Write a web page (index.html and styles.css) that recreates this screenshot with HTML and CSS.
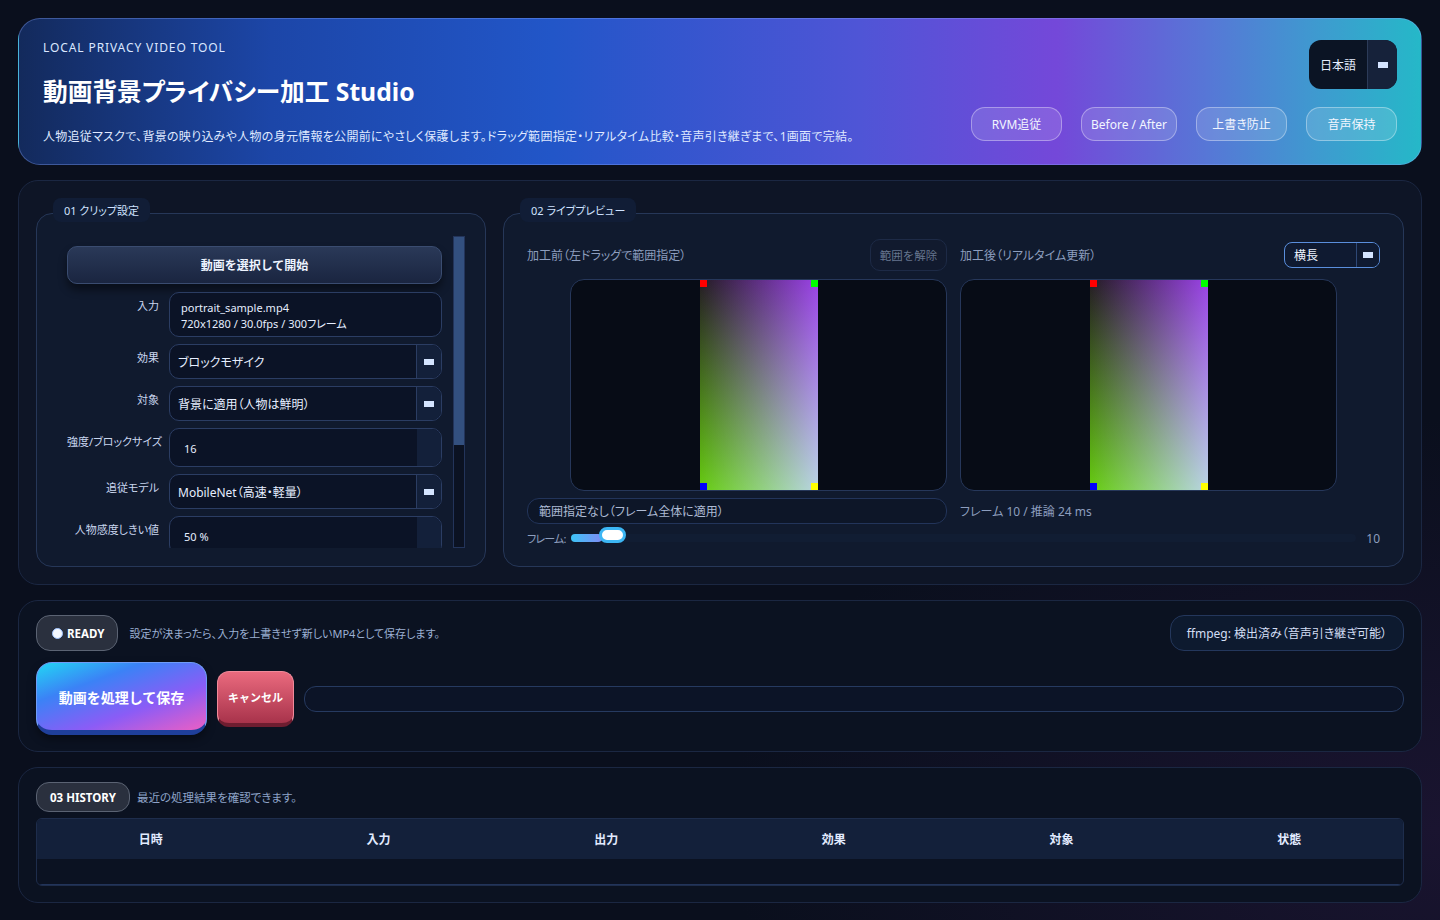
FILE: index.html
```html
<!DOCTYPE html>
<html lang="ja">
<head>
    <meta charset="UTF-8">
    <title>動画背景プライバシー加工 Studio</title>
    <link rel="stylesheet" href="styles.css">
</head>
<body>
    <div class="app">
        <header class="hero">
            <div class="hero-text">
                <div class="eyebrow">LOCAL PRIVACY VIDEO TOOL</div>
                <h1>動画背景プライバシー加工 Studio</h1>
                <p>人物追従マスクで、背景の映り込みや人物の身元情報を公開前にやさしく保護します。ドラッグ範囲指定・リアルタイム比較・音声引き継ぎまで、1画面で完結。</p>
            </div>
            <div class="hero-side">
                <div class="lang-combo">
                    <span class="lang-value">日本語</span>
                    <span class="lang-arrow"><i class="arrow"></i></span>
                </div>
                <div class="chips">
                    <span class="chip">RVM追従</span>
                    <span class="chip">Before / After</span>
                    <span class="chip">上書き防止</span>
                    <span class="chip">音声保持</span>
                </div>
            </div>
        </header>

        <section class="panel main-panel">
            <div class="group clip-group">
                <div class="group-title">01 クリップ設定</div>
                <div class="scroll-area">
                    <div class="scroll-content">
                        <button class="open-btn">動画を選択して開始</button>
                        <div class="form-row">
                            <label>入力</label>
                            <div class="info-box">
                                portrait_sample.mp4<br>
                                720x1280 / 30.0fps / 300フレーム
                            </div>
                        </div>
                        <div class="form-row">
                            <label>効果</label>
                            <div class="combo"><span>ブロックモザイク</span><span class="combo-btn"><i class="arrow"></i></span></div>
                        </div>
                        <div class="form-row">
                            <label>対象</label>
                            <div class="combo"><span>背景に適用（人物は鮮明）</span><span class="combo-btn"><i class="arrow"></i></span></div>
                        </div>
                        <div class="form-row">
                            <label>強度/ブロックサイズ</label>
                            <div class="spin"><span>16</span><span class="spin-btn"></span></div>
                        </div>
                        <div class="form-row">
                            <label>追従モデル</label>
                            <div class="combo"><span>MobileNet（高速・軽量）</span><span class="combo-btn"><i class="arrow"></i></span></div>
                        </div>
                        <div class="form-row">
                            <label>人物感度しきい値</label>
                            <div class="spin"><span>50 %</span><span class="spin-btn"></span></div>
                        </div>
                    </div>
                    <div class="scrollbar"><div class="scroll-handle"></div></div>
                </div>
            </div>

            <div class="group preview-group">
                <div class="group-title">02 ライブプレビュー</div>
                <div class="preview-cols">
                    <div class="preview-col before">
                        <div class="preview-head">
                            <span class="muted">加工前（左ドラッグで範囲指定）</span>
                            <button class="ghost-btn">範囲を解除</button>
                        </div>
                        <div class="preview-box">
                            <div class="frame">
                                <i class="mark tl"></i><i class="mark tr"></i><i class="mark bl"></i><i class="mark br"></i>
                            </div>
                        </div>
                        <div class="range-box">範囲指定なし（フレーム全体に適用）</div>
                    </div>
                    <div class="preview-col after">
                        <div class="preview-head">
                            <span class="muted">加工後（リアルタイム更新）</span>
                            <div class="small-combo"><span>横長</span><span class="combo-btn"><i class="arrow"></i></span></div>
                        </div>
                        <div class="preview-box">
                            <div class="frame">
                                <i class="mark tl"></i><i class="mark tr"></i><i class="mark bl"></i><i class="mark br"></i>
                            </div>
                        </div>
                        <div class="stats">フレーム 10 / 推論 24 ms</div>
                    </div>
                </div>
                <div class="slider-row">
                    <span class="muted slider-label">フレーム:</span>
                    <div class="slider">
                        <div class="slider-fill" style="width: 31px"></div>
                        <div class="slider-knob" style="left: 28px"></div>
                    </div>
                    <span class="muted">10</span>
                </div>
            </div>
        </section>

        <section class="panel status-panel">
            <div class="status-row">
                <span class="pill ready"><i class="dot"></i>READY</span>
                <span class="note">設定が決まったら、入力を上書きせず新しいMP4として保存します。</span>
                <span class="ffmpeg">ffmpeg: 検出済み（音声引き継ぎ可能）</span>
            </div>
            <div class="action-row">
                <button class="process-btn">動画を処理して保存</button>
                <button class="cancel-btn">キャンセル</button>
                <div class="progress"></div>
            </div>
        </section>

        <section class="panel history-panel">
            <div class="history-head">
                <span class="pill">03 HISTORY</span>
                <span class="note">最近の処理結果を確認できます。</span>
            </div>
            <div class="table-wrap">
                <table>
                    <thead>
                        <tr>
                            <th>日時</th>
                            <th>入力</th>
                            <th>出力</th>
                            <th>効果</th>
                            <th>対象</th>
                            <th>状態</th>
                        </tr>
                    </thead>
                    <tbody>
                        <tr><td colspan="6"></td></tr>
                    </tbody>
                </table>
            </div>
        </section>
    </div>
</body>
</html>
```

FILE: styles.css
```css
* {
    box-sizing: border-box;
}

body {
    margin: 0;
    background: radial-gradient(ellipse at 100% 90%, #1a1430 0%, #0a0f1d 35%) #0a0f1d;
    font-family: "Noto Sans", "Noto Sans CJK JP", sans-serif;
    font-size: 12px;
    color: #dbe6fb;
    font-feature-settings: "palt";
}

.app {
    padding: 18px;
    display: flex;
    flex-direction: column;
    gap: 15px;
}

/* header */
.hero {
    height: 147px;
    border-radius: 22px;
    border: 1px solid rgba(140, 170, 255, 0.35);
    background: linear-gradient(90deg, #132a5c 0%, #1c46a8 18%, #2256c8 38%, #4f55d6 60%, #7448d9 74%, #5678d6 85%, #3d9ccf 93%, #25b8c8 100%);
    padding: 22px 24px 23px 24px;
    display: flex;
    justify-content: space-between;
}

.eyebrow {
    font-size: 12px;
    letter-spacing: 0.9px;
    color: #dbe7ff;
    margin-top: -2px;
}

.hero h1 {
    margin: 18px 0 0 0;
    font-size: 24.7px;
    font-weight: 700;
    color: #ffffff;
    line-height: 36px;
}

.hero p {
    margin: 17px 0 0 0;
    font-size: 12px;
    letter-spacing: 0.28px;
    color: #dfe8ff;
}

.hero-side {
    display: flex;
    flex-direction: column;
    align-items: flex-end;
    justify-content: space-between;
}

.lang-combo {
    width: 88px;
    height: 49px;
    margin-top: -1px;
    border-radius: 12px;
    background: #0b1424;
    display: flex;
    overflow: hidden;
}

.lang-value {
    flex: 1;
    display: flex;
    align-items: center;
    justify-content: center;
    color: #e6eeff;
    border-right: 1px solid #2c3b58;
}

.lang-arrow {
    width: 29px;
    background: #16223a;
    display: flex;
    align-items: center;
    justify-content: center;
}

.arrow {
    display: block;
    width: 10px;
    height: 6px;
    background: #d4e4ff;
}

.chips {
    display: flex;
    gap: 19px;
}

.chip {
    height: 34px;
    min-width: 91px;
    padding: 0 9px;
    border-radius: 14px;
    border: 1px solid rgba(255, 255, 255, 0.35);
    background: rgba(255, 255, 255, 0.13);
    color: #f2f6ff;
    display: flex;
    align-items: center;
    justify-content: center;
    font-size: 12px;
}

/* panels */
.panel {
    border-radius: 20px;
    border: 1px solid #1b2742;
    padding: 17px;
}

.main-panel {
    background: #0e1526;
    display: flex;
    gap: 17px;
    height: 405px;
}

.group {
    position: relative;
    margin-top: 15px;
    border: 1px solid #263758;
    border-radius: 16px;
    background: #101a2e;
}

.group-title {
    position: absolute;
    top: -16px;
    left: 16px;
    height: 24px;
    padding: 0 11px;
    border-radius: 8px;
    background: #111d36;
    color: #cfe2ff;
    font-size: 11px;
    display: flex;
    align-items: center;
}

.clip-group {
    width: 450px;
    padding: 22px 20px 19px 19px;
}

.scroll-area {
    display: flex;
    height: 312px;
}

.scroll-content {
    flex: 1;
    overflow: hidden;
    padding: 10px 11px 0 11px;
}

.scrollbar {
    width: 12px;
    border: 1px solid #23345a;
    background: #0b1222;
}

.scroll-handle {
    height: 208px;
    background: #33507f;
}

.open-btn {
    width: 100%;
    height: 38px;
    border-radius: 10px;
    border: 1px solid #3a4c70;
    background: linear-gradient(180deg, #2a3958 0%, #1a2540 100%);
    color: #eef4ff;
    font-family: inherit;
    font-size: 12px;
    font-weight: 700;
    box-shadow: 0 6px 8px rgba(0, 0, 0, 0.45);
    margin-bottom: 8px;
}

.form-row {
    display: flex;
    gap: 10px;
    margin-bottom: 7px;
}

.form-row label {
    width: 92px;
    text-align: right;
    color: #c9d6ee;
    font-size: 11px;
    padding-top: 5px;
    white-space: nowrap;
}

.info-box {
    flex: 1;
    height: 45px;
    border: 1px solid #2b3d63;
    border-radius: 10px;
    background: #0b1326;
    padding: 7px 11px;
    line-height: 16px;
    font-size: 11px;
    color: #e6eeff;
}

.combo, .spin {
    flex: 1;
    height: 35px;
    border: 1px solid #2b3d63;
    border-radius: 10px;
    background: #0b1326;
    display: flex;
    overflow: hidden;
    color: #e6eeff;
}

.spin {
    height: 39px;
    font-size: 11px;
}

.combo span:first-child, .spin span:first-child {
    flex: 1;
    display: flex;
    align-items: center;
    padding-left: 8px;
}

.spin span:first-child {
    padding-left: 14px;
    padding-top: 2px;
}

.combo-btn {
    width: 25px;
    border-left: 1px solid #2b3d63;
    background: #13203a;
    display: flex;
    align-items: center;
    justify-content: center;
}

.spin-btn {
    width: 24px;
    background: #13203a;
}

/* preview */
.preview-group {
    flex: 1;
    padding: 25px 23px 20px 23px;
}

.preview-cols {
    display: flex;
    gap: 13px;
}

.preview-col {
    flex: 1;
    display: flex;
    flex-direction: column;
}

.preview-head {
    height: 32px;
    display: flex;
    align-items: center;
    justify-content: space-between;
}

.muted {
    color: #8d9ebf;
}

.ghost-btn {
    width: 77px;
    height: 32px;
    padding: 0;
    border-radius: 10px;
    border: 1px solid #1d2a46;
    background: #111a2e;
    color: #66768f;
    font-family: inherit;
    font-size: 11.5px;
}

.small-combo {
    width: 96px;
    height: 26px;
    border: 1.5px solid #5a8edc;
    border-radius: 8px;
    background: #0f1a31;
    display: flex;
    overflow: hidden;
    color: #eef4ff;
}

.small-combo span:first-child {
    flex: 1;
    display: flex;
    align-items: center;
    padding-left: 9px;
}

.small-combo .combo-btn {
    width: 23px;
    border-left-color: #2e4876;
    background: #0f1a31;
}

.preview-box {
    width: 377px;
    height: 212px;
    margin-top: 8px;
    border: 1px solid #26375a;
    border-radius: 14px;
    background: #070c16;
    overflow: hidden;
    display: flex;
    justify-content: center;
}

.before .preview-box {
    align-self: flex-end;
}

.frame {
    position: relative;
    width: 118px;
    height: 100%;
    background: linear-gradient(90deg, rgba(138, 43, 226, 0) 0%, #8a2be2 100%), linear-gradient(180deg, #241c24 0%, #66cc10 100%);
    background-blend-mode: screen;
}

.mark {
    position: absolute;
    width: 7px;
    height: 7px;
}

.mark.tl { top: 0; left: 0; background: #ff0000; }
.mark.tr { top: 0; right: 0; background: #00ff00; }
.mark.bl { bottom: 0; left: 0; background: #0000ff; }
.mark.br { bottom: 0; right: 0; background: #ffff00; }

.range-box {
    margin-top: 7px;
    height: 26px;
    border: 1px solid #22345a;
    border-radius: 12px;
    background: #0d1628;
    padding-left: 11px;
    display: flex;
    align-items: center;
    color: #aebbd4;
}

.stats {
    margin-top: 7px;
    height: 26px;
    display: flex;
    align-items: center;
    color: #8d9ebf;
}

.slider-row {
    margin-top: 4px;
    display: flex;
    align-items: center;
    gap: 5px;
    height: 20px;
}

.slider-label {
    font-size: 11px;
    letter-spacing: -0.8px;
}

.slider {
    position: relative;
    flex: 1;
    height: 8px;
    border-radius: 4px;
    background: #111d33;
    margin-right: 5px;
}

.slider-fill {
    height: 100%;
    border-radius: 4px;
    background: linear-gradient(90deg, #3cc4f6, #7f8cf5);
}

.slider-knob {
    position: absolute;
    top: -7px;
    width: 27px;
    height: 16px;
    border-radius: 8px;
    background: #ffffff;
    border: 3px solid #3cb6f4;
}

/* status */
.status-panel {
    background: #0b1221;
    padding: 14px 17px 16px 17px;
}

.status-row {
    display: flex;
    align-items: center;
    gap: 11px;
}

.pill {
    height: 36px;
    padding: 0 13px;
    border-radius: 14px;
    border: 1px solid #5b6373;
    background: #2a303e;
    color: #ffffff;
    font-weight: 700;
    font-size: 11.5px;
    display: flex;
    align-items: center;
}

.ready {
    padding: 0 13px 0 15px;
}

.dot {
    width: 11px;
    height: 11px;
    border-radius: 50%;
    background: #f4f8ff;
    border: 1px solid #9fc3ff;
    margin-right: 4px;
}

.note {
    color: #9bb0d3;
    font-size: 11px;
}

.ffmpeg {
    margin-left: auto;
    height: 36px;
    padding: 0 16px;
    border-radius: 14px;
    border: 1px solid #24375c;
    background: #0d1a2f;
    color: #d3def4;
    display: flex;
    align-items: center;
}

.action-row {
    margin-top: 11px;
    display: flex;
    align-items: center;
    gap: 10px;
}

.process-btn {
    width: 171px;
    height: 73px;
    border-radius: 16px;
    border: 1px solid #6f9cf7;
    border-bottom: 5px solid #1f3f9a;
    background: linear-gradient(160deg, #22d6f4 0%, #3b82f6 30%, #8b5cf6 65%, #ec5fc4 100%);
    color: #ffffff;
    font-family: inherit;
    font-size: 14px;
    font-weight: 700;
    box-shadow: 0 4px 8px rgba(0, 0, 0, 0.4);
}

.cancel-btn {
    width: 77px;
    height: 56px;
    border-radius: 12px;
    border: 1px solid #f08a9a;
    border-bottom: 4px solid #6e1d30;
    background: linear-gradient(180deg, #ea6a7e 0%, #a8334b 100%);
    color: #ffffff;
    font-family: inherit;
    font-size: 11px;
    font-weight: 700;
}

.progress {
    flex: 1;
    height: 26px;
    border-radius: 12px;
    border: 1px solid #263a60;
    background: #0c1427;
}

/* history */
.history-panel {
    background: #0b1221;
    padding: 14px 17px 16px 17px;
}

.history-head {
    display: flex;
    align-items: center;
    gap: 7px;
}

.history-head .pill {
    height: 30px;
    border-radius: 13px;
}

.history-head .note {
    color: #8ea3c8;
    font-size: 11.5px;
}

.table-wrap {
    margin-top: 6px;
    border: 1px solid #1e2d4c;
    border-radius: 6px;
    overflow: hidden;
    background: #0b1222;
}

table {
    width: 100%;
    border-collapse: collapse;
    table-layout: fixed;
}

th {
    height: 40px;
    background: #13203a;
    color: #e2ebff;
    font-weight: 700;
    font-size: 12px;
}

td {
    height: 25px;
    border-bottom: 1px solid #22345a;
}
```
